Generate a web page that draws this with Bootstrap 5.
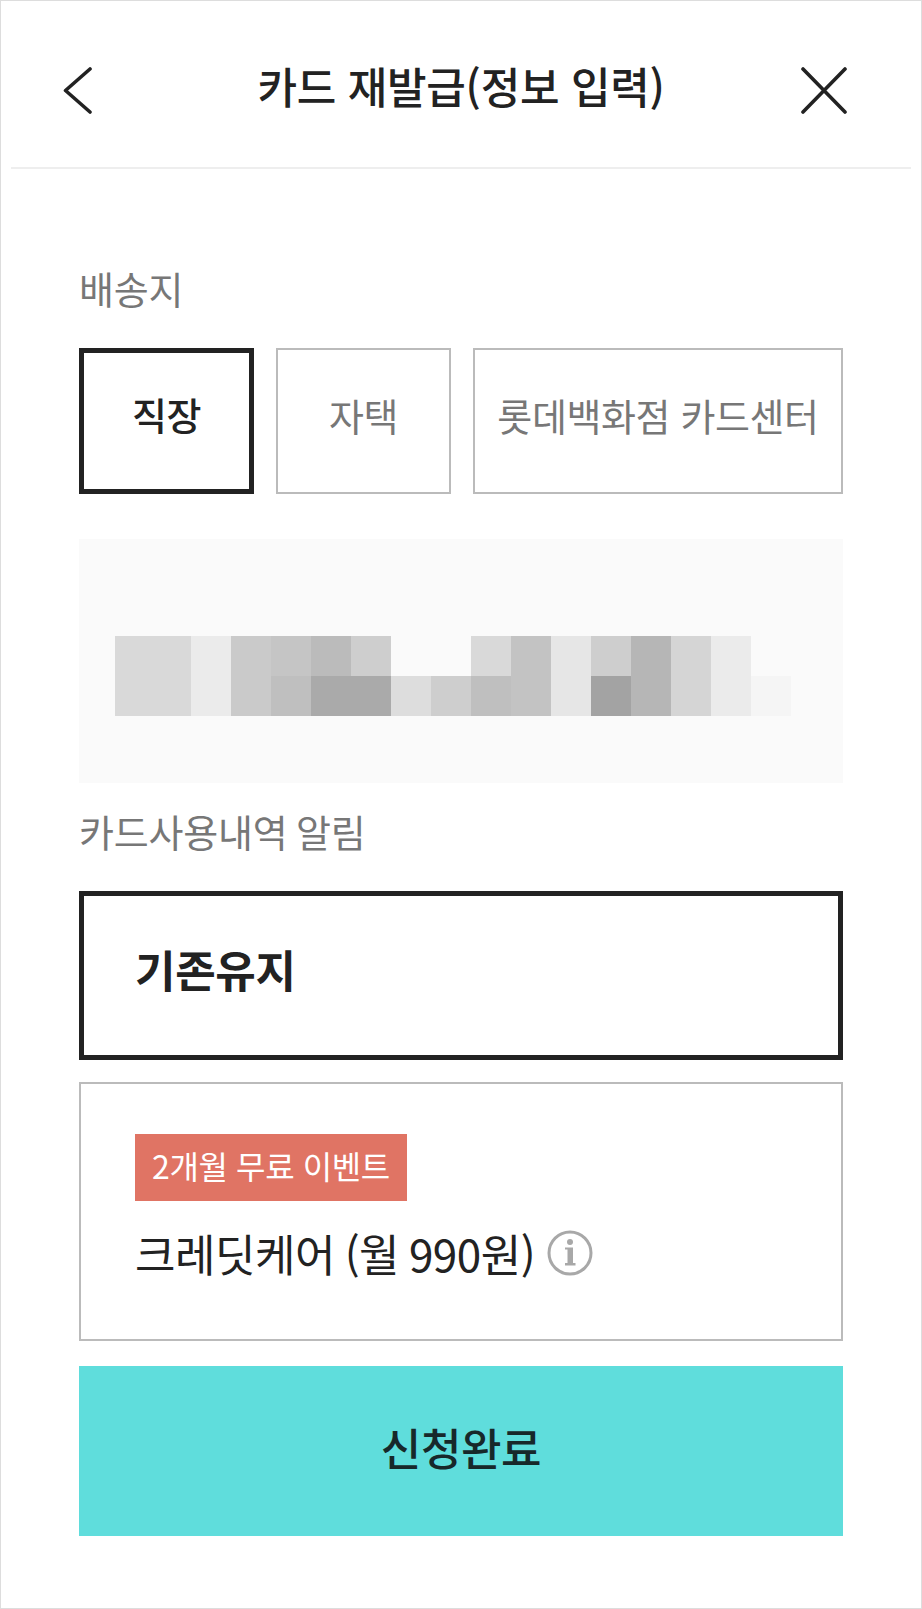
<!DOCTYPE html>
<html lang="ko">
<head>
<meta charset="utf-8">
<title>카드 재발급(정보 입력)</title>
<link href="https://cdn.jsdelivr.net/npm/bootstrap@5.3.0/dist/css/bootstrap.min.css" rel="stylesheet">
<style>
html,body{margin:0;background:#fff}
body{font-family:"Noto Sans CJK KR","Noto Sans",sans-serif;color:#222}
.screen{width:922px;height:1609px;border:1px solid #ddd;overflow:hidden;background:#fff}
.topbar{height:168px;margin:0 10px;border-bottom:2px solid #eee;padding:12px 63px 0;display:grid;grid-template-columns:1fr auto 1fr;align-items:center}
.topbar svg{display:block}
.bar-back{margin-left:-11px}
.bar-close{justify-self:end}
.bar-title{font-size:43px;font-weight:500;letter-spacing:-.3px;line-height:50px;margin:0 0 10px;color:#222}
.content{padding:0 78px}
.field-label{font-size:38px;line-height:48px;color:#777;letter-spacing:-.2px;word-spacing:-2px;margin:0}
.lbl-one{margin-top:95px}
.lbl-two{margin-top:24px}
.choice-row{margin-top:36px;gap:22px;height:146px}
.pick{border-radius:0;background:#fff;border:2px solid #bbb;color:#777;font-size:38px;letter-spacing:-.4px;line-height:48px;padding:0 0 13px;display:flex;align-items:center;justify-content:center}
.pick-sm{width:175px}
.pick-lg{flex:1}
.pick-on{border:5px solid #222;color:#222;font-weight:500;padding-bottom:14px}
.addr-box{margin-top:45px;height:244px;background:#fafafa;padding:97px 36px 0}
.mosaic{display:grid;grid-template-columns:76px repeat(15,40px);grid-template-rows:40px 40px}
.s-a3{background:#a3a3a3}.s-aa{background:#aaa}.s-b6{background:#b6b6b6}.s-bb{background:#bbb}
.s-bf{background:#bfbfbf}.s-c3{background:#c3c3c3}.s-c5{background:#c5c5c5}.s-ca{background:#cacaca}
.s-ce{background:#cecece}.s-d5{background:#d5d5d5}.s-d9{background:#d9d9d9}.s-dd{background:#ddd}
.s-e6{background:#e6e6e6}.s-eb{background:#ebebeb}.s-f5{background:#f5f5f5}
.plan-on{margin-top:36px;height:169px;border:5px solid #222;padding:0 0 14px 51px;font-size:44px;font-weight:700;line-height:56px;letter-spacing:-.3px;color:#222}
.plan-off{margin-top:22px;height:259px;border:2px solid #bbb;padding:50px 0 0 54px}
.promo{width:272px;height:67px;background:#e07464;color:#fff;font-size:32px;line-height:62px;text-align:center;letter-spacing:-.4px}
.plan-name{margin-top:27px;font-size:44px;line-height:50px;letter-spacing:-.5px;word-spacing:-2px;color:#222;gap:12px}
.submit{margin-top:25px;height:170px;width:100%;background:#5fdddc;border:0;border-radius:0;font-size:44px;font-weight:500;letter-spacing:-.4px;color:#17282a;padding:0 0 8px}
.submit:hover{background:#5fdddc;color:#17282a}
</style>
</head>
<body>
<div class="screen">
  <header class="topbar">
    <svg class="bar-back" width="30" height="47" viewBox="0 0 30 47" fill="none" stroke="#222" stroke-width="3.6" stroke-linecap="round" stroke-linejoin="round"><path d="M27 2 2.5 23.5 27 45" /></svg>
    <h1 class="bar-title">카드 재발급(정보 입력)</h1>
    <svg class="bar-close" width="48" height="47" viewBox="0 0 48 47" fill="none" stroke="#222" stroke-width="3.6" stroke-linecap="round"><path d="M3 2 45 45M45 2 3 45"/></svg>
  </header>
  <main class="content">
    <p class="field-label lbl-one">배송지</p>
    <div class="d-flex choice-row">
      <button type="button" class="btn pick pick-sm pick-on">직장</button>
      <button type="button" class="btn pick pick-sm">자택</button>
      <button type="button" class="btn pick pick-lg">롯데백화점 카드센터</button>
    </div>
    <div class="addr-box">
      <div class="mosaic">
        <i class="s-d9"></i><i class="s-eb"></i><i class="s-ca"></i><i class="s-c5"></i><i class="s-bb"></i><i class="s-ce"></i><i></i><i></i><i class="s-d9"></i><i class="s-c3"></i><i class="s-e6"></i><i class="s-ce"></i><i class="s-b6"></i><i class="s-d5"></i><i class="s-eb"></i><i></i>
        <i class="s-d9"></i><i class="s-eb"></i><i class="s-ca"></i><i class="s-bf"></i><i class="s-aa"></i><i class="s-aa"></i><i class="s-dd"></i><i class="s-ce"></i><i class="s-bf"></i><i class="s-c3"></i><i class="s-e6"></i><i class="s-a3"></i><i class="s-b6"></i><i class="s-d5"></i><i class="s-eb"></i><i class="s-f5"></i>
      </div>
    </div>
    <p class="field-label lbl-two">카드사용내역 알림</p>
    <div class="plan-on d-flex align-items-center">기존유지</div>
    <div class="plan-off">
      <div class="promo">2개월 무료 이벤트</div>
      <div class="plan-name d-flex align-items-center">
        <span>크레딧케어 (월 990원)</span>
        <svg width="46" height="46" viewBox="0 0 46 46" fill="none"><circle cx="23" cy="23" r="21" stroke="#a8a8a8" stroke-width="3"/><circle cx="23" cy="12" r="3" fill="#a8a8a8"/><path d="M18 17.5H26V33H28.5V35.5H18V33H20.5V19.5H18Z" fill="#a8a8a8"/></svg>
      </div>
    </div>
    <button type="button" class="btn submit">신청완료</button>
  </main>
</div>
<script src="https://cdn.jsdelivr.net/npm/bootstrap@5.3.0/dist/js/bootstrap.bundle.min.js"></script>
</body>
</html>
